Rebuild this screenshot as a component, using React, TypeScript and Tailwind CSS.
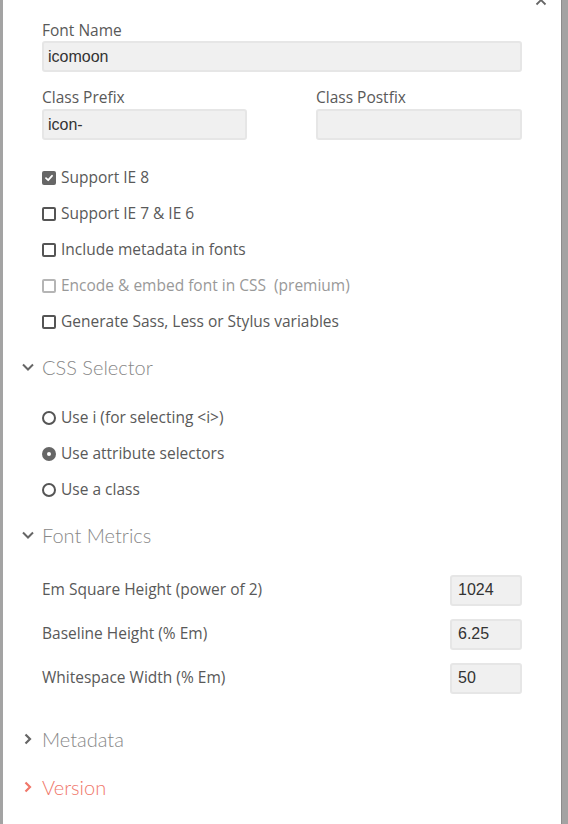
import React from "react";

const bodyFont = { fontFamily: "'Open Sans', 'Noto Sans', sans-serif" };

function Check({ checked, disabled }: { checked?: boolean; disabled?: boolean }) {
    if (checked) {
        return (
            <span className="w-[14px] h-[14px] rounded-[2px] bg-[#666] flex items-center justify-center shrink-0">
                <svg width="10" height="10" viewBox="0 0 10 10">
                    <path d="M2 5.2 L4.2 7.2 L8 2.8" stroke="#fff" strokeWidth="1.8" fill="none" strokeLinecap="round" strokeLinejoin="round" />
                </svg>
            </span>
        );
    }
    return (
        <span
            className={
                disabled
                    ? "w-[14px] h-[14px] rounded-[2px] border-2 border-[#b5b5b5] shrink-0"
                    : "w-[14px] h-[14px] rounded-[2px] border-2 border-[#555] shrink-0"
            }
        />
    );
}

function Radio({ checked }: { checked?: boolean }) {
    if (checked) {
        return (
            <span className="w-[14px] h-[14px] rounded-full bg-[#666] flex items-center justify-center shrink-0">
                <span className="w-[4px] h-[4px] rounded-full bg-white" />
            </span>
        );
    }
    return <span className="w-[14px] h-[14px] rounded-full border-2 border-[#555] shrink-0" />;
}

function Chevron({ open, color }: { open?: boolean; color: string }) {
    return (
        <svg width="12" height="12" viewBox="0 0 12 12" className="shrink-0">
            {open ? (
                <path d="M1 3.5 L6 8.5 L11 3.5" stroke={color} strokeWidth="2" fill="none" />
            ) : (
                <path d="M3.5 1.5 L8 6 L3.5 10.5" stroke={color} strokeWidth="2.2" fill="none" />
            )}
        </svg>
    );
}

function Section({ title, open, red }: { title: string; open?: boolean; red?: boolean }) {
    return (
        <div className="flex items-center gap-[8px] pl-[19px] h-[30px] font-['Lato',sans-serif]">
            <Chevron open={open} color={red ? "#f0776a" : "#666"} />
            <span className={red ? "text-[20px] font-light text-[#f0776a]" : "text-[20px] font-light text-[#888]"}>{title}</span>
        </div>
    );
}

const inputCls =
    "h-[31px] rounded-[3px] bg-[#f0f0f0] border-2 border-[#e6e6e6] px-[4px] flex items-center text-[16px] text-[#333] font-['Liberation_Sans',Arial,sans-serif]";

export default function App() {
    const checks = [
        { label: "Support IE 8", checked: true },
        { label: "Support IE 7 & IE 6" },
        { label: "Include metadata in fonts" },
        { label: "Encode & embed font in CSS\u00a0 (premium)", disabled: true },
        { label: "Generate Sass, Less or Stylus variables" },
    ];
    const radios = [
        { label: "Use i (for selecting <i>)" },
        { label: "Use attribute selectors", checked: true },
        { label: "Use a class" },
    ];
    const metrics = [
        { label: "Em Square Height (power of 2)", value: "1024" },
        { label: "Baseline Height (% Em)", value: "6.25" },
        { label: "Whitespace Width (% Em)", value: "50" },
    ];

    return (
        <div className="w-[568px] h-[824px] bg-[#a3a3a3] overflow-hidden" style={bodyFont}>
            <div className="relative ml-[3px] w-[559px] h-[824px] bg-white border-r border-[#8c8c8c] text-[#595959] text-[15.5px]">
                {/* close button, scrolled mostly off the top */}
                <svg className="absolute right-[14px] top-[-6px]" width="12" height="12" viewBox="0 0 12 12">
                    <path d="M1.5 1.5 L10.5 10.5 M10.5 1.5 L1.5 10.5" stroke="#666" strokeWidth="1.8" />
                </svg>

                {/* Font name + prefixes */}
                <div className="pl-[39px] pr-[39px] pt-[20px]">
                    <div className="leading-[20px] mb-[1px]">Font Name</div>
                    <div className={inputCls}>icomoon</div>

                    <div className="grid grid-cols-[205px_206px] justify-between mt-[15px]">
                        <div>
                            <div className="leading-[20px] mb-[2px]">Class Prefix</div>
                            <div className={inputCls}>icon-</div>
                        </div>
                        <div>
                            <div className="leading-[20px] mb-[2px]">Class Postfix</div>
                            <div className={inputCls}></div>
                        </div>
                    </div>

                    <div className="mt-[20px] flex flex-col">
                        {checks.map((c) => (
                            <div key={c.label} className="h-[36px] flex items-center gap-[5px]">
                                <Check checked={c.checked} disabled={c.disabled} />
                                <span className={c.disabled ? "text-[#999]" : ""}>{c.label}</span>
                            </div>
                        ))}
                    </div>
                </div>

                <div className="mt-[12px]">
                    <Section title="CSS Selector" open />
                </div>
                <div className="pl-[39px] mt-[18px] flex flex-col">
                    {radios.map((r) => (
                        <div key={r.label} className="h-[36px] flex items-center gap-[5px]">
                            <Radio checked={r.checked} />
                            <span>{r.label}</span>
                        </div>
                    ))}
                </div>

                <div className="mt-[12px]">
                    <Section title="Font Metrics" open />
                </div>
                <div className="pl-[39px] pr-[39px] mt-[18px] flex flex-col">
                    {metrics.map((m) => (
                        <div key={m.label} className="h-[44px] flex items-center justify-between">
                            <span>{m.label}</span>
                            <div className={inputCls + " w-[72px] pl-[6px]"}>{m.value}</div>
                        </div>
                    ))}
                </div>

                <div className="mt-[24px]">
                    <Section title="Metadata" />
                </div>
                <div className="mt-[18px]">
                    <Section title="Version" red />
                </div>
            </div>
        </div>
    );
}
